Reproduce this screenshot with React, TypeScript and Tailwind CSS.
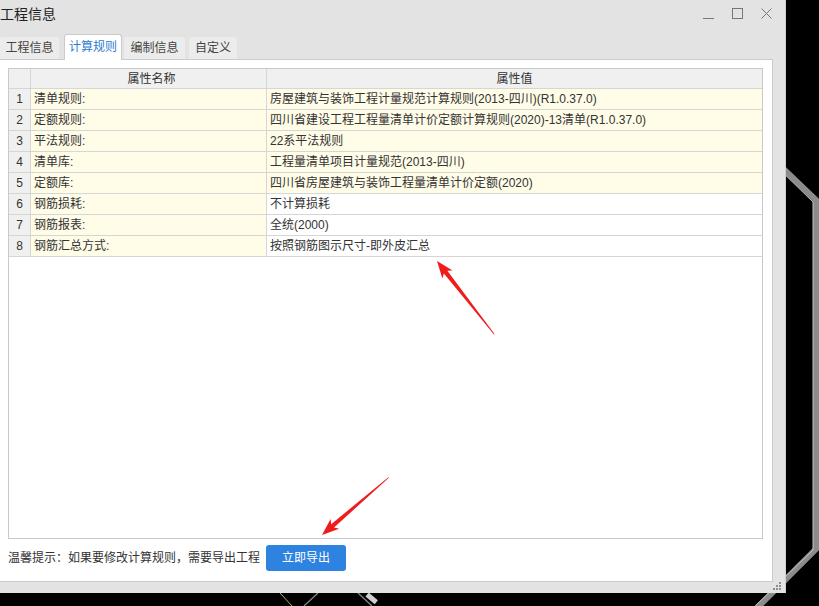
import React from "react";

// Calculation-rules dialog sitting over a dark CAD canvas.

type Row = { name: string; value: string; locked: boolean };

const ROWS: Row[] = [
  { name: "清单规则:", value: "房屋建筑与装饰工程计量规范计算规则(2013-四川)(R1.0.37.0)", locked: true },
  { name: "定额规则:", value: "四川省建设工程工程量清单计价定额计算规则(2020)-13清单(R1.0.37.0)", locked: true },
  { name: "平法规则:", value: "22系平法规则", locked: true },
  { name: "清单库:", value: "工程量清单项目计量规范(2013-四川)", locked: true },
  { name: "定额库:", value: "四川省房屋建筑与装饰工程量清单计价定额(2020)", locked: true },
  { name: "钢筋损耗:", value: "不计算损耗", locked: false },
  { name: "钢筋报表:", value: "全统(2000)", locked: false },
  { name: "钢筋汇总方式:", value: "按照钢筋图示尺寸-即外皮汇总", locked: false },
];

const TABS = [
  { label: "工程信息", w: "w-[59px]", ml: "ml-0" },
  { label: "计算规则", w: "w-[58px]", ml: "ml-[5px]" },
  { label: "编制信息", w: "w-[61px]", ml: "ml-[2px]" },
  { label: "自定义", w: "w-[48px]", ml: "ml-[4px]" },
];

function Arrow({ tipX, tipY, angle, length }: { tipX: number; tipY: number; angle: number; length: number }) {
  const L = length;
  return (
    <polygon
      transform={`translate(${tipX} ${tipY}) rotate(${angle})`}
      points={`0,0 -17,-6.5 -14,-2.2 -${L},-0.4 -${L},0.4 -14,2.2 -17,6.5`}
      fill="#ee1c1c"
    />
  );
}

function CadBackdrop() {
  return (
    <svg className="absolute inset-0" width="819" height="606" viewBox="0 0 819 606">
      <polyline points="772,158 816,200 816,549 753,612" fill="none" stroke="#8c8c8c" strokeWidth="6" />
      <polyline points="772,162 813,202 813,550 749,612" fill="none" stroke="#c4c4c4" strokeWidth="1" />
      <line x1="280" y1="593" x2="292" y2="606" stroke="#b5b060" strokeWidth="1" />
      <line x1="318" y1="593" x2="304" y2="606" stroke="#8a8a8a" strokeWidth="1.2" />
      <line x1="358" y1="593" x2="372" y2="606" stroke="#8a8a8a" strokeWidth="1.2" />
      <rect x="366" y="596" width="12" height="5" fill="#d0d0d0" transform="rotate(40 372 598)" />
    </svg>
  );
}

function WindowControls() {
  return (
    <div className="flex items-center gap-[18px] pr-[13px]">
      <svg width="11" height="11" viewBox="0 0 11 11">
        <line x1="0" y1="10.5" x2="11" y2="10.5" stroke="#777" strokeWidth="1" />
      </svg>
      <svg width="11" height="11" viewBox="0 0 11 11">
        <rect x="0.5" y="0.5" width="10" height="10" fill="none" stroke="#777" strokeWidth="1" />
      </svg>
      <svg width="11" height="11" viewBox="0 0 11 11">
        <path d="M0.5 0.5 L10.5 10.5 M10.5 0.5 L0.5 10.5" stroke="#777" strokeWidth="1" />
      </svg>
    </div>
  );
}

export default function App() {
  return (
    <div
      className="relative h-[606px] w-[819px] overflow-hidden bg-black text-[12px] text-[#333]"
      style={{ fontFamily: '"Liberation Sans", "Noto Sans CJK SC", sans-serif' }}
    >
      <CadBackdrop />

      <div className="relative flex h-[593px] w-[786px] flex-col border-r border-[#cfcfcf] bg-[#e3e3e3]">
        {/* title bar */}
        <div className="flex h-[34px] items-start justify-between pt-[4px]">
          <span className="text-[14px] leading-[20px] text-[#222]">工程信息</span>
          <div className="pt-[4px]">
            <WindowControls />
          </div>
        </div>

        {/* tabs */}
        <div className="relative z-10 flex h-[25px] items-end">
          {TABS.map((t, i) =>
            i === 1 ? (
              <div
                key={t.label}
                className={`${t.w} ${t.ml} -mb-px flex h-[26px] items-center justify-center rounded-t-[3px] border border-b-0 border-[#cbcbcb] bg-white pb-[2px] text-[#2a7bd4]`}
              >
                {t.label}
              </div>
            ) : (
              <div
                key={t.label}
                className={`${t.w} ${t.ml} flex h-[22px] items-center justify-center rounded-t-[3px] bg-[#ececec] text-[#444]`}
              >
                {t.label}
              </div>
            )
          )}
        </div>

        {/* panel */}
        <div className="mr-[12px] flex h-[523px] flex-col border border-l-0 border-[#cbcbcb] bg-white">
          <div className="ml-[8px] mr-[9px] mt-[8px] h-[471px] border border-[#c9c9c9]">
            <div className="grid h-[20px] grid-cols-[22px_236px_1fr] border-b border-[#d6d6d6] bg-[#f0f0f0]">
              <div className="border-r border-[#d6d6d6]" />
              <div className="flex items-center justify-center border-r border-[#d6d6d6] pl-[6px]">属性名称</div>
              <div className="flex items-center justify-center">属性值</div>
            </div>
            {ROWS.map((r, i) => (
              <div key={r.name} className="grid h-[21px] grid-cols-[22px_236px_1fr] border-b border-[#d6d6d6]">
                <div className="flex items-center justify-center border-r border-[#d6d6d6] bg-[#f0f0f0]">{i + 1}</div>
                <div className="flex items-center border-r border-[#d6d6d6] bg-[#fffce8] pl-[3px]">{r.name}</div>
                <div className={`flex items-center pl-[3px] ${r.locked ? "bg-[#fffce8]" : "bg-white"}`}>{r.value}</div>
              </div>
            ))}
          </div>

          <div className="mt-[6px] flex items-center pl-[8px]">
            <span className="w-[258px]">温馨提示：如果要修改计算规则，需要导出工程</span>
            <button className="flex h-[26px] w-[80px] items-center justify-center rounded-[3px] bg-[#2e82e0] text-[12px] text-white">
              立即导出
            </button>
          </div>
        </div>

        {/* resize grip */}
        <svg className="absolute bottom-[2px] right-[3px]" width="9" height="9" viewBox="0 0 9 9">
          <rect x="6" y="0" width="2" height="2" fill="#8f8f8f" />
          <rect x="3" y="3" width="2" height="2" fill="#8f8f8f" />
          <rect x="6" y="3" width="2" height="2" fill="#8f8f8f" />
          <rect x="0" y="6" width="2" height="2" fill="#8f8f8f" />
          <rect x="3" y="6" width="2" height="2" fill="#8f8f8f" />
          <rect x="6" y="6" width="2" height="2" fill="#8f8f8f" />
        </svg>
      </div>

      {/* annotation arrows */}
      <svg className="pointer-events-none absolute inset-0" width="819" height="606" viewBox="0 0 819 606">
        <Arrow tipX={437} tipY={261} angle={-128} length={93} />
        <Arrow tipX={322} tipY={535} angle={139.2} length={88} />
      </svg>
    </div>
  );
}
